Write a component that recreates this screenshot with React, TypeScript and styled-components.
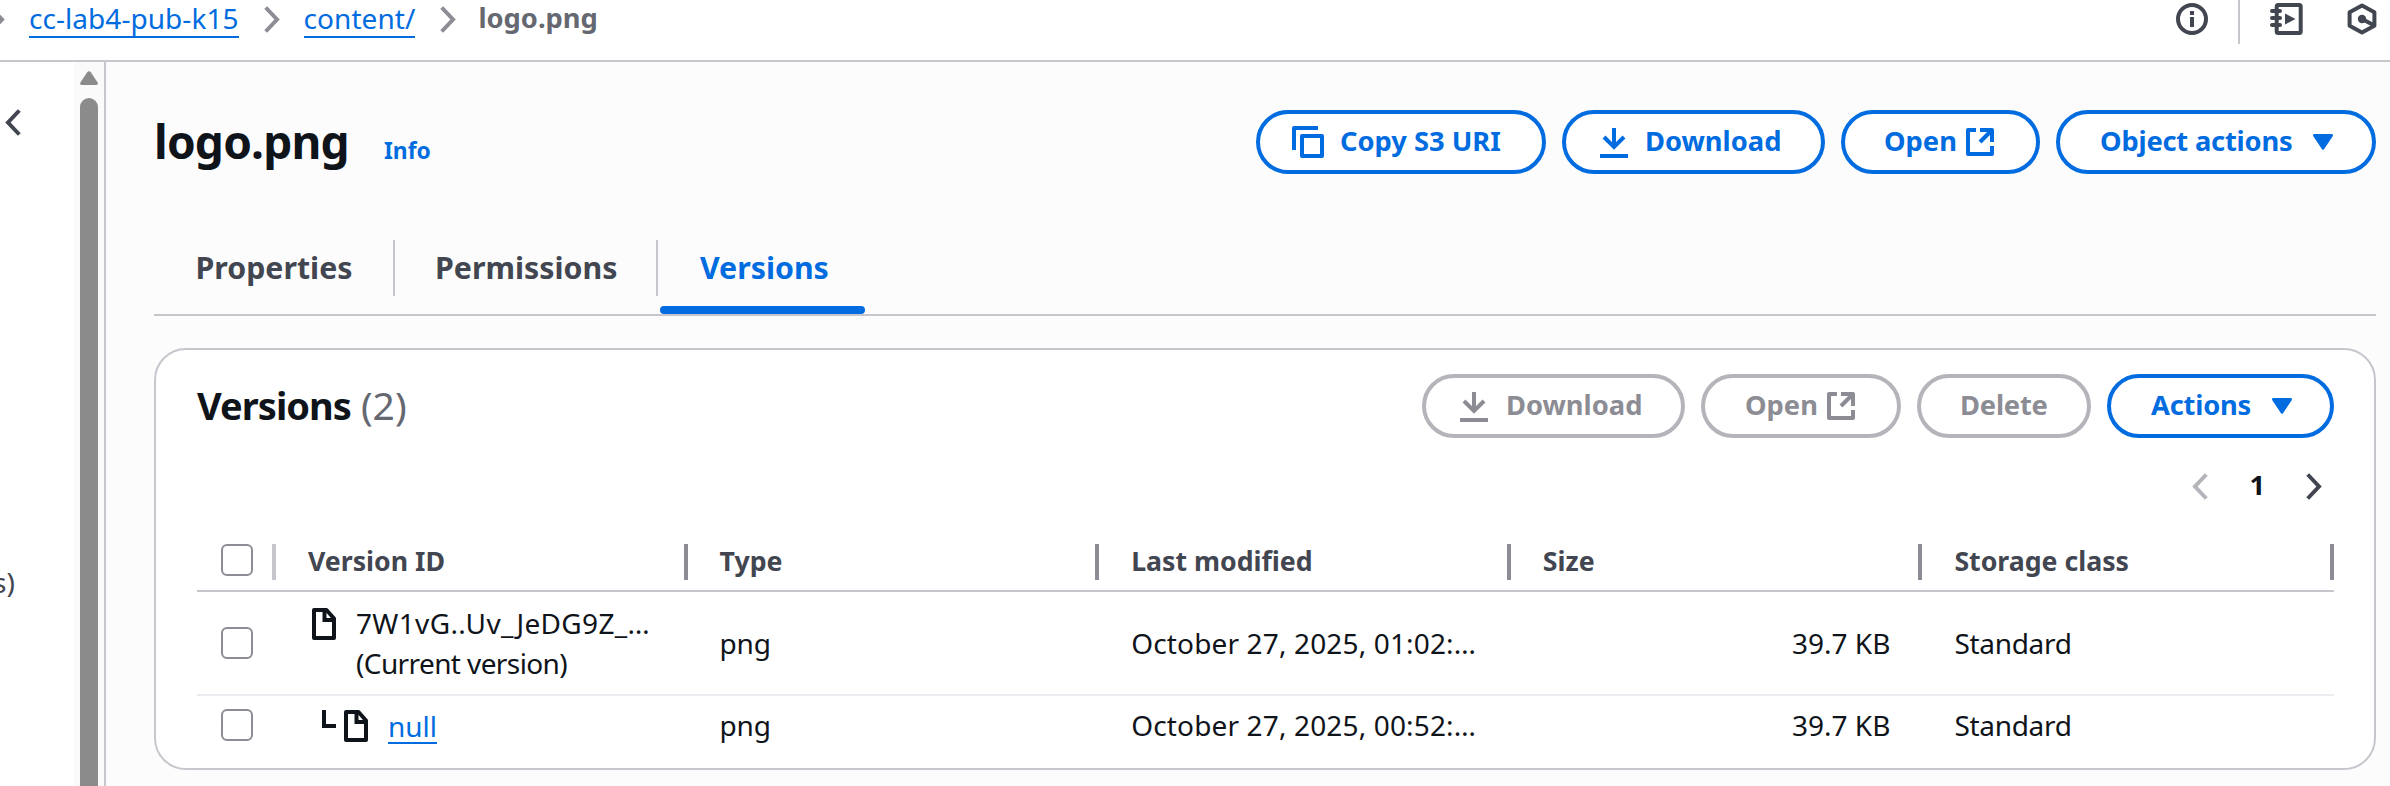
import React from "react";
import styled, { createGlobalStyle } from "styled-components";

const color = {
  blue: "#006ce0",
  ink: "#0f141a",
  strong: "#424650",
  muted: "#656871",
  icon: "#8c8c94",
  disabledBorder: "#b4b4bb",
  line: "#c6c6cd",
  rowLine: "#ebebf0",
  canvas: "#fcfcfd",
};

const GlobalStyle = createGlobalStyle`
  *, *::before, *::after { box-sizing: border-box; }
  body {
    margin: 0;
    background: #fff;
    color: ${color.ink};
    font: 400 28px/40px "Noto Sans", "Open Sans", sans-serif;
    overflow: hidden;
  }
  svg { display: block; flex: none; }
`;

const Page = styled.div`
  display: flex;
  flex-direction: column;
  width: 2390px;
  height: 786px;
`;

const TopBar = styled.header`
  display: flex;
  justify-content: space-between;
  flex: none;
  height: 62px;
  border-bottom: 2px solid ${color.line};
`;

const Breadcrumbs = styled.nav`
  display: flex;
  align-items: center;
  height: 40px;
  margin: -1px 0 0 -11px;
  white-space: nowrap;
`;

const Crumb = styled.a<{ $after: number }>`
  height: 37px;
  line-height: 34px;
  margin-right: ${(p) => p.$after}px;
  color: ${color.blue};
  border-bottom: 2px solid ${color.blue};
  letter-spacing: 0.05px;
`;

const CurrentCrumb = styled.span`
  line-height: 36px;
  padding-bottom: 3px;
  margin-left: 22px;
  color: ${color.muted};
  font-size: 27.3px;
  font-weight: 700;
`;

const CrumbGap = styled.span<{ $size: number }>`
  width: ${(p) => p.$size}px;
  flex: none;
`;

const Tools = styled.div`
  display: flex;
  align-items: flex-start;
  padding-right: 12px;
`;

const ToolIcon = styled.span<{ $after: number }>`
  margin: 3px ${(p) => p.$after}px 0 0;
`;

const ToolDivider = styled.span`
  width: 2px;
  height: 44px;
  margin-right: 30px;
  background: ${color.line};
`;

const Body = styled.div`
  display: flex;
  flex: 1;
  min-height: 0;
`;

const SideNav = styled.aside`
  display: flex;
  width: 106px;
  flex: none;
  border-right: 2px solid ${color.line};
`;

const SideContent = styled.div`
  width: 74px;
  padding: 47px 0 0 5px;
  overflow: hidden;
`;

const SideItem = styled.div`
  margin: 426px 0 0 -12px;
  color: ${color.strong};
`;

const ScrollTrack = styled.div`
  display: flex;
  flex-direction: column;
  align-items: center;
  width: 30px;
  padding-top: 9px;
  background: #fafafa;
`;

const ScrollThumb = styled.div`
  width: 18px;
  flex: 1;
  margin-top: 13px;
  border-radius: 9px 9px 0 0;
  background: #8b8b8b;
`;

const Main = styled.main`
  flex: 1;
  padding: 48px 14px 0 48px;
  background: ${color.canvas};
`;

const HeaderRow = styled.div`
  display: flex;
  justify-content: space-between;
  height: 64px;
`;

const TitleGroup = styled.div`
  display: flex;
  align-items: baseline;
  height: 62px;
  line-height: 62px;
`;

const PageTitle = styled.h1`
  width: 230px;
  margin: 0;
  font-size: 46px;
  font-weight: 700;
  line-height: 62px;
  letter-spacing: -0.8px;
`;

const InfoLink = styled.a`
  color: ${color.blue};
  font-size: 22.8px;
  font-weight: 700;
`;

const Actions = styled.div`
  display: flex;
  gap: 16px;
`;

const Button = styled.button<{ $width: number; $start: number; $disabled?: boolean }>`
  display: flex;
  align-items: center;
  width: ${(p) => p.$width}px;
  height: 64px;
  padding: 0 0 0 ${(p) => p.$start - 4}px;
  border: 4px solid ${(p) => (p.$disabled ? color.disabledBorder : color.blue)};
  border-radius: 32px;
  background: #fff;
  color: ${(p) => (p.$disabled ? color.icon : color.blue)};
  font: 700 27.3px/40px "Noto Sans", "Open Sans", sans-serif;
  white-space: nowrap;
`;

const Label = styled.span<{ $before?: number; $after?: number; $track?: number }>`
  padding-bottom: 2px;
  margin-left: ${(p) => p.$before ?? 0}px;
  margin-right: ${(p) => p.$after ?? 0}px;
  letter-spacing: ${(p) => p.$track ?? 0}px;
`;

const Tabs = styled.div`
  display: flex;
  height: 76px;
  margin-top: 66px;
  border-bottom: 2px solid ${color.line};
`;

const Tab = styled.div<{ $width: number; $start: number; $active?: boolean }>`
  display: flex;
  flex-direction: column;
  justify-content: space-between;
  width: ${(p) => p.$width}px;
  color: ${(p) => (p.$active ? color.blue : color.strong)};
  margin-left: ${(p) => (p.$active ? 2 : 0)}px;

  span {
    height: 56px;
    padding-left: ${(p) => p.$start}px;
    border-right: ${(p) => (p.$active ? "none" : `2px solid ${color.line}`)};
    font-size: 30.3px;
    font-weight: 700;
    line-height: 56px;
  }
`;

const ActiveBar = styled.div`
  height: 8px;
  border-radius: 4px;
  background: ${color.blue};
`;

const Card = styled.section`
  height: 422px;
  margin-top: 32px;
  padding: 24px 40px 0 41px;
  border: 2px solid ${color.line};
  border-radius: 32px;
  background: #fff;
`;

const CardTitle = styled.h2`
  margin: 0;
  font-size: 38px;
  font-weight: 700;
  line-height: 62px;
  letter-spacing: -0.95px;

  span {
    margin-left: 1px;
    color: ${color.muted};
    font-size: 39px;
    font-weight: 400;
    letter-spacing: 0;
  }
`;

const Pagination = styled.div`
  display: flex;
  align-items: center;
  justify-content: flex-end;
  height: 40px;
  margin: 28px 12px 28px 0;
  font-size: 27.3px;
  font-weight: 700;
`;

const Row = styled.div<{ $height: number; $line: string }>`
  display: grid;
  grid-template-columns: 79px repeat(5, 1fr);
  align-items: center;
  height: ${(p) => p.$height}px;
  border-bottom: 2px solid ${(p) => p.$line};
  white-space: nowrap;
`;

const HeadCell = styled.div`
  display: flex;
  align-items: center;
  height: 36px;
  padding: 0 0 2px 32px;
  border-right: 4px solid ${color.icon};
  color: ${color.strong};
  font-size: 26.7px;
  font-weight: 700;
`;

const Cell = styled.div<{ $right?: boolean; $track?: number }>`
  padding: 0 32px;
  text-align: ${(p) => (p.$right ? "right" : "left")};
  letter-spacing: ${(p) => p.$track ?? 0}px;
`;

const SelectCell = styled.div<{ $head?: boolean }>`
  display: flex;
  align-items: flex-start;
  height: ${(p) => (p.$head ? 36 : 32)}px;
  padding-left: 24px;
  border-right: ${(p) => (p.$head ? `4px solid ${color.line}` : "none")};
`;

const Checkbox = styled.span`
  width: 32px;
  height: 32px;
  border: 2px solid ${color.icon};
  border-radius: 6px;
  background: #fff;
`;

const VersionCell = styled.div<{ $start: number }>`
  display: flex;
  align-items: flex-start;
  padding-left: ${(p) => p.$start}px;
`;

const VersionText = styled.div`
  display: flex;
  flex-direction: column;
  align-items: flex-start;
  margin-left: 20px;
`;

const FileIcon = styled.span<{ $top: number }>`
  margin-top: ${(p) => p.$top}px;
`;

const Branch = styled.span`
  width: 14px;
  height: 18px;
  margin: 3px 8px 0 0;
  border: solid ${color.ink};
  border-width: 0 0 4px 4px;
`;

const VersionLink = styled.a`
  height: 37px;
  line-height: 38px;
  color: ${color.blue};
  border-bottom: 2px solid ${color.blue};
`;

const Tracked = styled.span<{ $track: number }>`
  letter-spacing: ${(p) => p.$track}px;
`;

const Chevron = ({ left, tint }: { left?: boolean; tint: string }) => (
  <svg width="16" height="27" viewBox="0 0 16 27" fill="none" stroke={tint} strokeWidth="4">
    <path d={left ? "M14.3 1.5 3 13.5l11.3 12" : "M1.7 1.5 13 13.5 1.7 25.5"} />
  </svg>
);

const CopyIcon = () => (
  <svg width="32" height="32" viewBox="0 0 32 32" fill="none" stroke="currentColor" strokeWidth="4">
    <path d="M2 24V2h24" strokeLinejoin="round" />
    <path d="M10 10h20v20H10z" strokeLinejoin="round" />
  </svg>
);

const DownloadIcon = () => (
  <svg width="32" height="32" viewBox="0 0 32 32" fill="none" stroke="currentColor" strokeWidth="4">
    <path d="M2 30h28M16 2v19M6 11l10 10 10-10" />
  </svg>
);

const ExternalIcon = () => (
  <svg width="32" height="32" viewBox="0 0 32 32" fill="none" stroke="currentColor" strokeWidth="4">
    <path d="M12 4H4v24h24V20" strokeLinejoin="round" />
    <path d="M16 4h12v12" strokeLinejoin="round" />
    <path d="M28 4 16 16" />
  </svg>
);

const Caret = () => (
  <svg width="20" height="16" viewBox="0 0 20 16" fill="currentColor">
    <path d="M1.4 0h17.2c1.2 0 1.8 1.2 1.1 2.2L11 15.2a1.3 1.3 0 0 1-2 0L.3 2.2C-.4 1.2.2 0 1.4 0z" />
  </svg>
);

const DocIcon = () => (
  <svg width="24" height="32" viewBox="0 0 24 32" fill="none" stroke={color.ink} strokeWidth="4">
    <path d="M2 2h12.5L22 10.5V30H2z" strokeLinejoin="round" />
    <path d="M12.5 2v10H22" />
  </svg>
);

const InfoIcon = () => (
  <svg width="32" height="32" viewBox="0 0 32 32" fill={color.strong}>
    <circle cx="16" cy="16" r="14" fill="none" stroke={color.strong} strokeWidth="4" />
    <path d="M14 8h4v4h-4zM14 14h4v10h-4z" />
  </svg>
);

const NotebookIcon = () => (
  <svg width="33" height="32" viewBox="0 0 33 32" fill="none" stroke={color.strong} strokeWidth="4">
    <rect x="6.7" y="2" width="24" height="28" rx="1.5" />
    <path d="M2 8h8M2 15h8M2 22h8" strokeLinecap="round" />
    <path d="M15 10.500 25.500 16 15 21.500z" fill={color.strong} stroke="none" />
  </svg>
);

const HexagonIcon = () => (
  <svg width="32" height="32" viewBox="0 0 32 32" fill="none" stroke={color.strong} strokeWidth="4">
    <path d="M16 2.600 28.400 9.300v13.400L16 29.400 3.600 22.700V9.300z" strokeLinejoin="round" />
    <path d="M16 16l12.400 6.500" />
    <circle cx="16" cy="16" r="4.200" fill={color.strong} stroke="none" />
  </svg>
);

const App = () => (
  <Page>
    <GlobalStyle />
    <TopBar>
      <Breadcrumbs>
        <Chevron tint={color.icon} />
        <CrumbGap $size={24} />
        <Crumb $after={25}>cc-lab4-pub-k15</Crumb>
        <Chevron tint={color.icon} />
        <CrumbGap $size={24} />
        <Crumb $after={25}>content/</Crumb>
        <Chevron tint={color.icon} />
        <CurrentCrumb>logo.png</CurrentCrumb>
      </Breadcrumbs>
      <Tools>
        <ToolIcon $after={30}><InfoIcon /></ToolIcon>
        <ToolDivider />
        <ToolIcon $after={43}><NotebookIcon /></ToolIcon>
        <ToolIcon $after={0}><HexagonIcon /></ToolIcon>
      </Tools>
    </TopBar>
    <Body>
      <SideNav>
        <SideContent>
          <Chevron left tint={color.strong} />
          <SideItem>s)</SideItem>
        </SideContent>
        <ScrollTrack>
          <svg width="18" height="14" viewBox="0 0 18 14" fill="#8b8b8b">
            <path d="M7.200 1.200a2.200 2.200 0 0 1 3.600 0l6.800 10.300c.7 1.200.1 2.500-1.300 2.500H1.700C.3 14-.3 12.700.4 11.500z" />
          </svg>
          <ScrollThumb />
        </ScrollTrack>
      </SideNav>
      <Main>
        <HeaderRow>
          <TitleGroup>
            <PageTitle>logo.png</PageTitle>
            <InfoLink>Info</InfoLink>
          </TitleGroup>
          <Actions>
            <Button $width={290} $start={36}>
              <CopyIcon />
              <Label $before={16}>Copy S3 URI</Label>
            </Button>
            <Button $width={263} $start={36}>
              <DownloadIcon />
              <Label $before={15}>Download</Label>
            </Button>
            <Button $width={199} $start={43}>
              <Label $after={7}>Open</Label>
              <ExternalIcon />
            </Button>
            <Button $width={320} $start={44}>
              <Label $after={21} $track={-0.2}>Object actions</Label>
              <Caret />
            </Button>
          </Actions>
        </HeaderRow>
        <Tabs>
          <Tab $width={241} $start={41.5}><span>Properties</span></Tab>
          <Tab $width={263} $start={40}><span>Permissions</span></Tab>
          <Tab $width={205} $start={40} $active>
            <span>Versions</span>
            <ActiveBar />
          </Tab>
        </Tabs>
        <Card>
          <HeaderRow>
            <CardTitle>Versions <span>(2)</span></CardTitle>
            <Actions>
              <Button $width={263} $start={36} $disabled>
                <DownloadIcon />
                <Label $before={16}>Download</Label>
              </Button>
              <Button $width={200} $start={44} $disabled>
                <Label $after={7}>Open</Label>
                <ExternalIcon />
              </Button>
              <Button $width={174} $start={43} $disabled>
                <Label $track={-0.2}>Delete</Label>
              </Button>
              <Button $width={227} $start={44}>
                <Label $after={21} $track={-0.2}>Actions</Label>
                <Caret />
              </Button>
            </Actions>
          </HeaderRow>
          <Pagination>
            <Chevron left tint={color.disabledBorder} />
            <Label $before={41} $after={41}>1</Label>
            <Chevron tint={color.strong} />
          </Pagination>
          <Row $height={58} $line={color.line}>
            <SelectCell $head><Checkbox /></SelectCell>
            <HeadCell>Version ID</HeadCell>
            <HeadCell>Type</HeadCell>
            <HeadCell>Last modified</HeadCell>
            <HeadCell>Size</HeadCell>
            <HeadCell>Storage class</HeadCell>
          </Row>
          <Row $height={104} $line={color.rowLine}>
            <SelectCell><Checkbox /></SelectCell>
            <VersionCell $start={36}>
              <FileIcon $top={5}><DocIcon /></FileIcon>
              <VersionText>
                <Tracked $track={0.35}>7W1vG..Uv_JeDG9Z_…</Tracked>
                <Tracked $track={-0.6}>(Current version)</Tracked>
              </VersionText>
            </VersionCell>
            <Cell $track={-0.2}>png</Cell>
            <Cell $track={0.15}>October 27, 2025, 01:02:…</Cell>
            <Cell $right>39.7 KB</Cell>
            <Cell $track={-0.3}>Standard</Cell>
          </Row>
          <Row $height={60} $line="transparent">
            <SelectCell><Checkbox /></SelectCell>
            <VersionCell $start={46}>
              <Branch />
              <FileIcon $top={3}><DocIcon /></FileIcon>
              <VersionText>
                <VersionLink>null</VersionLink>
              </VersionText>
            </VersionCell>
            <Cell $track={-0.2}>png</Cell>
            <Cell $track={0.15}>October 27, 2025, 00:52:…</Cell>
            <Cell $right>39.7 KB</Cell>
            <Cell $track={-0.3}>Standard</Cell>
          </Row>
        </Card>
      </Main>
    </Body>
  </Page>
);

export default App;
